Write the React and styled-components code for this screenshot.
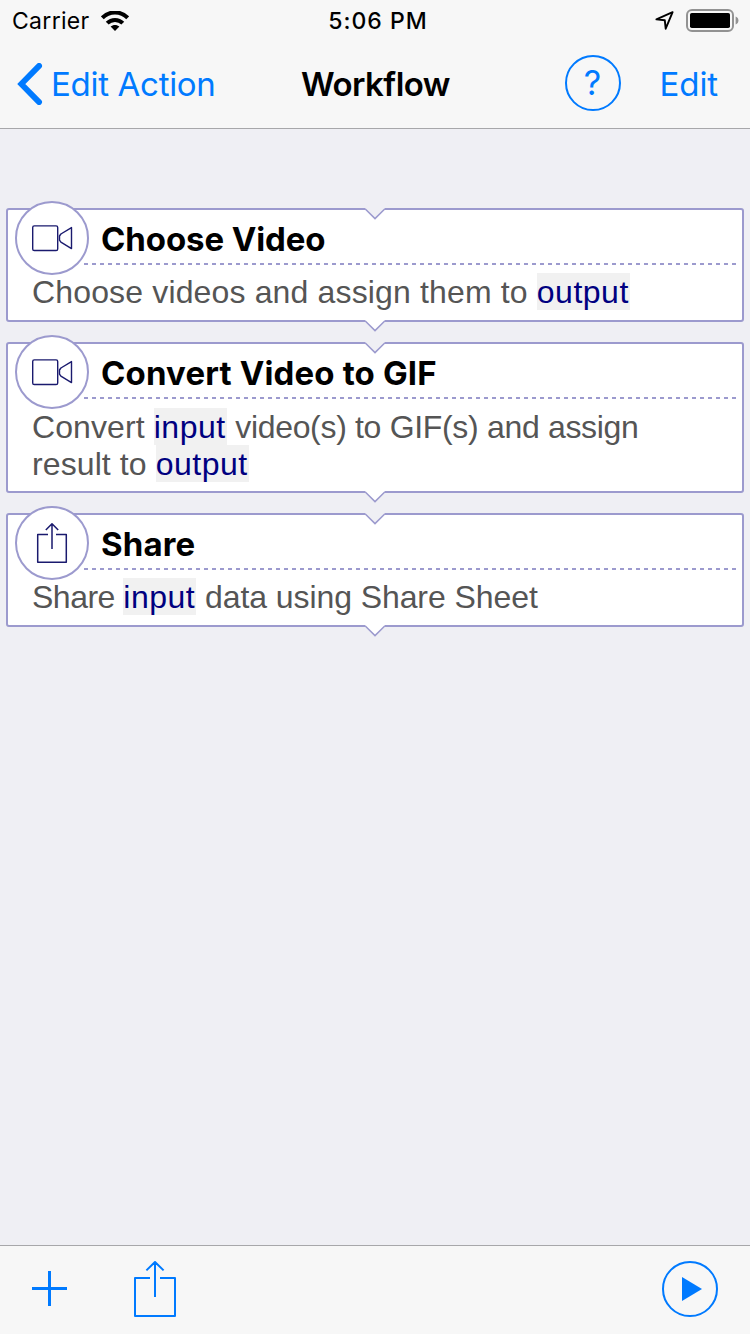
import React from "react";
import styled, { createGlobalStyle } from "styled-components";

const BLUE = "#007aff";
const LILAC = "#9c9ace";
const NAVY = "#1a1a6e";

const GlobalStyle = createGlobalStyle`
  *, *::before, *::after { box-sizing: border-box; }
  body { margin: 0; background: #efeff4; }
  svg { display: block; flex: none; }
`;

const Screen = styled.div`
  display: flex;
  flex-direction: column;
  width: 750px;
  height: 1334px;
  overflow: hidden;
  background: #efeff4;
  font-family: Inter, "Liberation Sans", sans-serif;
  color: #000;
`;

const Header = styled.header`
  flex: none;
  height: 129px;
  background: #f7f7f7;
  border-bottom: 1px solid #a7a7aa;
`;

const StatusBar = styled.div`
  display: grid;
  grid-template-columns: 1fr auto 1fr;
  align-items: center;
  height: 40px;
  padding: 0 11px 0 12px;
`;

const StatusGroup = styled.div`
  display: flex;
  align-items: center;
  justify-content: ${(p) => (p.$end ? "flex-end" : "flex-start")};
  gap: ${(p) => p.$gap}px;
`;

const Label = styled.span`
  white-space: pre;
  font-size: ${(p) => p.$size}px;
  font-weight: ${(p) => p.$weight || 400};
  letter-spacing: ${(p) => p.$track || 0}px;
  line-height: ${(p) => p.$line || 40}px;
`;

const StatusText = styled(Label)`
  padding: 1px 0 0 ${(p) => p.$inset || 0}px;
`;

const NavBar = styled.nav`
  display: grid;
  grid-template-columns: 1fr auto 1fr;
  align-items: center;
  height: 88px;
  padding: 0 16px 0 17px;
`;

const NavButton = styled.button`
  display: flex;
  align-items: center;
  gap: 8px;
  padding: 0;
  border: 0;
  background: none;
  color: ${BLUE};
  font-family: inherit;
`;

const NavActions = styled.div`
  display: flex;
  align-items: center;
  justify-content: flex-end;
  gap: 39px;
  padding-right: 16px;
`;

const RoundButton = styled.button`
  display: flex;
  align-items: center;
  justify-content: center;
  width: 56px;
  height: 56px;
  margin-top: ${(p) => p.$lift || 0}px;
  padding: 0 0 0 ${(p) => p.$nudge || 0}px;
  border: 2px solid ${BLUE};
  border-radius: 50%;
  background: none;
  color: ${BLUE};
  font-family: inherit;
`;

const Steps = styled.main`
  flex: 1;
  display: flex;
  flex-direction: column;
  gap: 20px;
  padding: 79px 6px 0;
`;

const Card = styled.section`
  position: relative;
  height: ${(p) => p.$height}px;
  border: 2px solid ${LILAC};
  border-radius: 3px;
  background: #fff;
`;

const Notch = styled.svg`
  position: absolute;
  left: 357px;
  ${(p) => (p.$bottom ? "bottom: -12px;" : "top: -2px;")}
`;

const Badge = styled.div`
  position: absolute;
  left: 7px;
  top: -9px;
  display: flex;
  align-items: center;
  justify-content: center;
  width: 74px;
  height: 74px;
  border: 2px solid ${LILAC};
  border-radius: 50%;
  background: #fff;
`;

const CardHead = styled.div`
  display: flex;
  align-items: center;
  height: 55px;
  margin: 0 5px 0 76px;
  padding: 3px 0 0 17px;
  background: repeating-linear-gradient(90deg, ${LILAC} 0 4px, transparent 4px 8px) 0 100% / 100% 2px no-repeat;
`;

const CardBody = styled.p`
  margin: 0;
  padding: ${(p) => p.$top}px 0 0 24px;
  white-space: nowrap;
  font-family: "Liberation Sans", Arial, sans-serif;
  font-size: 32px;
  line-height: 37px;
  color: #555;
`;

const Run = styled.span`
  letter-spacing: ${(p) => p.$track}px;
`;

const Variable = styled.span`
  padding: 1px 1px 0 0;
  background: #f1f1f1;
  color: #000080;
  letter-spacing: 0.5px;
`;

const Toolbar = styled.footer`
  flex: none;
  display: flex;
  align-items: center;
  justify-content: space-between;
  height: 89px;
  padding: 0 32px 2px;
  background: #f7f7f7;
  border-top: 1px solid #a7a7aa;
`;

const ToolGroup = styled.div`
  display: flex;
  align-items: center;
  gap: 67px;
`;

const WifiIcon = () => (
  <svg width="28" height="20" viewBox="0 0 28 20">
    <g fill="none" stroke="#000" strokeWidth="4">
      <path d="M1.3 6.8C8.2-.4 19.8-.4 26.7 6.8" />
      <path d="M6.2 12.2c4.3-4.4 11.3-4.4 15.6 0" />
    </g>
    <path d="M14 20l-4.4-4.4c2.4-2.3 6.4-2.3 8.8 0z" />
  </svg>
);

const LocationIcon = () => (
  <svg width="19" height="19" viewBox="0 0 19 19" fill="none" stroke="#000" strokeWidth="1.9" strokeLinejoin="round">
    <path d="M17.6 1.2L1.4 8.4l8.4.9.9 8.4z" />
  </svg>
);

const BatteryIcon = () => (
  <svg width="53" height="23" viewBox="0 0 53 23">
    <rect x="1" y="1" width="46" height="21" rx="5" fill="none" stroke="#929292" strokeWidth="2" />
    <rect x="4" y="4" width="40" height="15" rx="1.8" fill="#000" />
    <path d="M49.6 7.5c3.8 1.2 3.8 6.8 0 8z" fill="#929292" />
  </svg>
);

const BackIcon = () => (
  <svg width="26" height="42" viewBox="0 0 26 42" fill="none" stroke={BLUE} strokeWidth="5.8" strokeLinecap="round" strokeLinejoin="miter">
    <path d="M22.1 2.9L4.3 21l17.8 18.1" />
  </svg>
);

const VideoIcon = () => (
  <svg width="42" height="28" viewBox="0 0 42 28" fill="none" stroke={NAVY} strokeWidth="1.4" strokeLinejoin="round">
    <rect x="1.7" y="1.9" width="25" height="24.6" rx="1.6" />
    <path d="M40.5 3.6v21L29.9 18.2l-1.4-2v-4.2l1.4-2z" />
  </svg>
);

const SmallShareIcon = () => (
  <svg width="32" height="42" viewBox="0 0 32 42" fill="none" stroke={NAVY} strokeWidth="1.5" strokeLinejoin="round">
    <path d="M12 12.6H1.7v27.6h28.6V12.6H20M16 27V1.7M9.8 8L16 1.7 22.2 8" />
  </svg>
);

const PlusIcon = () => (
  <svg width="35" height="36" viewBox="0 0 35 36" fill="none" stroke={BLUE} strokeWidth="3">
    <path d="M0 17.5h35M17.5 0v35" />
  </svg>
);

const ShareIcon = () => (
  <svg width="42" height="56" viewBox="0 0 42 56" fill="none" stroke={BLUE} strokeWidth="2" strokeLinejoin="round">
    <path d="M16 17H1v38h40V17H26M21 36V1.4M12.4 9.4L21 1l8.6 8.4" />
  </svg>
);

const PlayIcon = () => (
  <svg width="20" height="24" viewBox="0 0 20 24">
    <path d="M0 0l20 12L0 24z" fill={BLUE} />
  </svg>
);

const Pointer = ({ bottom, fill }) => (
  <Notch $bottom={bottom} width="20" height="12" viewBox="0 0 20 12">
    <path d="M0 0h20v1.2L10 11 0 1.2z" fill={fill} />
    <path d="M0 .8L10 10.6 20 .8" fill="none" stroke={LILAC} strokeWidth="1.5" />
  </Notch>
);

const Step = ({ title, track, height, top, icon, children }) => (
  <Card $height={height}>
    <CardHead>
      <Label $size={33} $weight={700} $track={track}>{title}</Label>
    </CardHead>
    <CardBody $top={top}>{children}</CardBody>
    <Badge>{icon}</Badge>
    <Pointer fill="#efeff4" />
    <Pointer bottom fill="#fff" />
  </Card>
);

export default function App() {
  return (
    <Screen>
      <GlobalStyle />
      <Header>
        <StatusBar>
          <StatusGroup $gap={11}>
            <StatusText $size={23} $track={0.3}>Carrier</StatusText>
            <WifiIcon />
          </StatusGroup>
          <StatusText $size={23} $weight={500} $track={1} $inset={5}>5:06 PM</StatusText>
          <StatusGroup $end $gap={12}>
            <LocationIcon />
            <BatteryIcon />
          </StatusGroup>
        </StatusBar>
        <NavBar>
          <NavButton>
            <BackIcon />
            <Label $size={33} $track={-0.3}>Edit Action</Label>
          </NavButton>
          <Label $size={33} $weight={600} $track={-0.55}>Workflow</Label>
          <NavActions>
            <RoundButton $lift={-2}>
              <Label $size={34} $weight={400}>?</Label>
            </RoundButton>
            <NavButton>
              <Label $size={33} $track={-0.1}>Edit</Label>
            </NavButton>
          </NavActions>
        </NavBar>
      </Header>
      <Steps>
        <Step title="Choose Video" track={-0.1} height={114} top={9} icon={<VideoIcon />}>
          <Run $track={0.15}>Choose videos and assign them to </Run>
          <Variable>output</Variable>
        </Step>
        <Step title="Convert Video to GIF" track={0.15} height={151} top={10} icon={<VideoIcon />}>
          <Run $track={0.1}>Convert </Run>
          <Variable>input</Variable>
          <Run $track={-0.32}> video(s) to GIF(s) and assign</Run>
          <br />
          <Run $track={0.1}>result to </Run>
          <Variable>output</Variable>
        </Step>
        <Step title="Share" track={0.15} height={114} top={9} icon={<SmallShareIcon />}>
          <Run $track={-0.5}>Share </Run>
          <Variable>input</Variable>
          <Run $track={-0.08}> data using Share Sheet</Run>
        </Step>
      </Steps>
      <Toolbar>
        <ToolGroup>
          <PlusIcon />
          <ShareIcon />
        </ToolGroup>
        <RoundButton $nudge={4}>
          <PlayIcon />
        </RoundButton>
      </Toolbar>
    </Screen>
  );
}
